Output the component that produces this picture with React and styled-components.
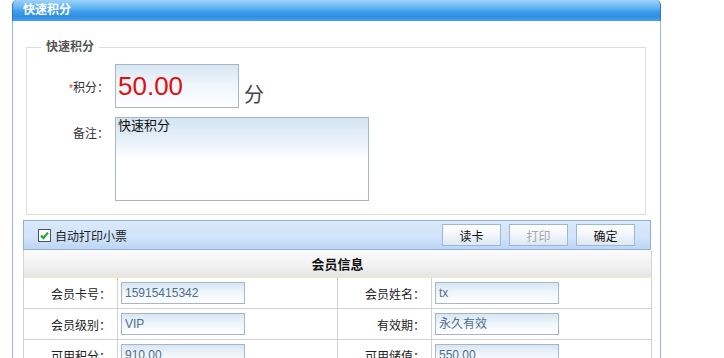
import styled, { createGlobalStyle } from "styled-components";

const GlobalStyle = createGlobalStyle`
  html, body {
    margin: 0;
    padding: 0;
    background: #fff;
    font-family: "Liberation Sans", "Noto Sans CJK SC", sans-serif;
    font-size: 12px;
    color: #222;
  }
`;

const members = [
  [
    { label: "会员卡号：", value: "15915415342" },
    { label: "会员姓名：", value: "tx" },
  ],
  [
    { label: "会员级别：", value: "VIP" },
    { label: "有效期：", value: "永久有效" },
  ],
  [
    { label: "可用积分：", value: "910.00" },
    { label: "可用储值：", value: "550.00" },
  ],
];

const App = () => {
  return (
    <>
      <GlobalStyle />
      <Panel>
        <PanelHeader>快速积分</PanelHeader>
        <PanelBody>
          <Fieldset>
            <Legend>快速积分</Legend>
            <FormRow $center>
              <Label>
                <Star>*</Star>积分：
              </Label>
              <PointsInput>50.00</PointsInput>
              <Unit>分</Unit>
            </FormRow>
            <FormRow>
              <Label $top>备注：</Label>
              <Memo>快速积分</Memo>
            </FormRow>
          </Fieldset>

          <Section>
            <Toolbar>
              <CheckLabel>
                <CheckBox>
                  <svg width="11" height="11" viewBox="0 0 11 11">
                    <path
                      d="M2 5.5 L4.4 8 L9 2.6"
                      fill="none"
                      stroke="#2aa33a"
                      strokeWidth="2.2"
                    />
                  </svg>
                </CheckBox>
                自动打印小票
              </CheckLabel>
              <Buttons>
                <Button>读卡</Button>
                <Button disabled>打印</Button>
                <Button>确定</Button>
              </Buttons>
            </Toolbar>

            <InfoTable>
              <colgroup>
                <col style={{ width: 94 }} />
                <col style={{ width: 220 }} />
                <col style={{ width: 94 }} />
                <col style={{ width: 220 }} />
              </colgroup>
              <thead>
                <tr>
                  <HeadCell colSpan={4}>会员信息</HeadCell>
                </tr>
              </thead>
              <tbody>
                {members.map((row, i) => (
                  <tr key={i}>
                    {row.map((cell) => (
                      <Cells key={cell.label} cell={cell} />
                    ))}
                  </tr>
                ))}
              </tbody>
            </InfoTable>
          </Section>
        </PanelBody>
      </Panel>
    </>
  );
};

const Cells = ({ cell }) => (
  <>
    <LabelCell>{cell.label}</LabelCell>
    <ValueCell>
      <ValueBox>{cell.value}</ValueBox>
    </ValueCell>
  </>
);

export default App;

const Panel = styled.div`
  margin-left: 12px;
  width: 649px;
  min-height: 100vh;
`;

const PanelHeader = styled.div`
  height: 21px;
  line-height: 20px;
  padding-left: 10px;
  color: #fff;
  font-weight: bold;
  font-size: 12px;
  border-radius: 5px 5px 0 0;
  background: linear-gradient(
    #9dd2fa 0%,
    #67b6f2 35%,
    #3f9ceb 55%,
    #2f8fe4 80%,
    #4aa3ea 100%
  );
  border-left: 1px solid #2a78c4;
  border-right: 1px solid #2a78c4;
  box-sizing: border-box;
`;

const PanelBody = styled.div`
  border-left: 1px solid #8fbce4;
  border-right: 1px solid #8fbce4;
  min-height: calc(100vh - 21px);
  box-sizing: border-box;
  padding-top: 18px;
`;

const Fieldset = styled.fieldset`
  margin: 0 14px 0 13px;
  padding: 9px 0 13px 0;
  border: 1px solid #dcdcdc;
  display: flex;
  flex-direction: column;
  gap: 9px;
`;

const Legend = styled.legend`
  margin-left: 14px;
  padding: 0 5px;
  font-size: 12px;
  font-weight: bold;
  color: #555;
  line-height: 16px;
`;

const FormRow = styled.div`
  display: flex;
  align-items: ${(p) => (p.$center ? "center" : "flex-start")};
`;

const Label = styled.div`
  width: 82px;
  margin-right: 6px;
  text-align: right;
  font-size: 12px;
  color: #333;
  padding-top: ${(p) => (p.$top ? "7px" : "0")};
`;

const Star = styled.span`
  color: #e03030;
  font-size: 10px;
`;

const fieldBg = `linear-gradient(#d7e6f3 0%, #eef5fb 45%, #ffffff 100%)`;

const PointsInput = styled.div`
  width: 124px;
  height: 44px;
  box-sizing: border-box;
  border: 1px solid #a5b6c4;
  background: ${fieldBg};
  color: #e01010;
  font-family: "Liberation Sans", Arial, sans-serif;
  font-size: 26px;
  line-height: 42px;
  padding-left: 2px;
`;

const Unit = styled.span`
  align-self: flex-end;
  margin-left: 5px;
  margin-bottom: 1px;
  font-size: 20px;
  line-height: 24px;
  color: #444;
`;

const Memo = styled.div`
  width: 254px;
  height: 84px;
  box-sizing: border-box;
  border: 1px solid #a5b6c4;
  background: linear-gradient(#d4e4f1 0%, #e9f2f9 30%, #ffffff 50%);
  font-size: 13px;
  color: #111;
  padding: 0 2px;
  line-height: 16px;
`;

const Section = styled.div`
  margin: 5px 9px 0 10px;
`;

const Toolbar = styled.div`
  height: 30px;
  box-sizing: border-box;
  border: 1px solid #8db0de;
  background: linear-gradient(#dbe9fb 0%, #d0e3fa 60%, #bcd5f4 100%);
  display: flex;
  align-items: center;
  justify-content: space-between;
  padding: 0 15px 0 14px;
`;

const CheckLabel = styled.label`
  display: flex;
  align-items: center;
  gap: 4px;
  font-size: 12px;
  color: #222;
`;

const CheckBox = styled.span`
  width: 13px;
  height: 13px;
  box-sizing: border-box;
  border: 1px solid #3d5a54;
  background: #fff;
  display: flex;
  align-items: center;
  justify-content: center;
`;

const Buttons = styled.div`
  display: flex;
  gap: 8px;
`;

const Button = styled.button`
  width: 59px;
  height: 22px;
  box-sizing: border-box;
  border: 1px solid #9db7d8;
  background: linear-gradient(#ffffff 0%, #f2f6fb 50%, #dde7f2 100%);
  font-family: "Liberation Sans", "Noto Sans CJK SC", sans-serif;
  font-size: 12px;
  color: #111;
  padding: 0;
  cursor: pointer;

  &:disabled {
    color: #a8a8a8;
    cursor: default;
  }
`;

const InfoTable = styled.table`
  width: 628px;
  border-collapse: collapse;
  table-layout: fixed;
`;

const HeadCell = styled.th`
  height: 27px;
  padding: 0;
  font-size: 13px;
  font-weight: bold;
  color: #111;
  border: 1px solid #d4d4d4;
  border-top: none;
  border-bottom: 1px solid #ecebc4;
  background: linear-gradient(#fbfbfb 0%, #f0f0f0 60%, #e4e4e4 100%);
`;

const LabelCell = styled.td`
  height: 30px;
  padding: 0 6px 0 0;
  text-align: right;
  font-size: 12px;
  color: #222;
  border: 1px solid #d0d0d0;
`;

const ValueCell = styled.td`
  padding: 0 0 0 3px;
  border: 1px solid #d0d0d0;
`;

const ValueBox = styled.div`
  width: 124px;
  height: 22px;
  box-sizing: border-box;
  border: 1px solid #a5b6c4;
  background: ${fieldBg};
  color: #4f6f8f;
  font-size: 12px;
  line-height: 20px;
  padding-left: 3px;
`;
